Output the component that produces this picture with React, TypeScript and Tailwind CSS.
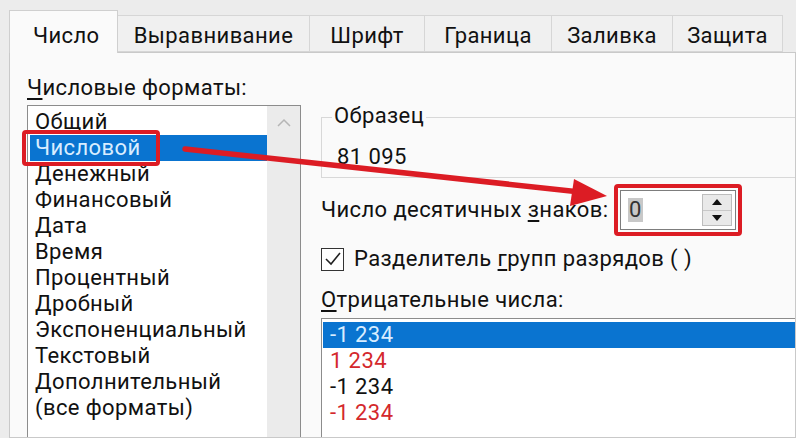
import React from "react";

const leftItems = [
  "Общий",
  "Числовой",
  "Денежный",
  "Финансовый",
  "Дата",
  "Время",
  "Процентный",
  "Дробный",
  "Экспоненциальный",
  "Текстовый",
  "Дополнительный",
  "(все форматы)",
];

const negItems: { t: string; c: string }[] = [
  { t: "-1 234", c: "sel" },
  { t: "1 234", c: "red" },
  { t: "-1 234", c: "black" },
  { t: "-1 234", c: "red" },
];

export default function App() {
  return (
    <div
      className="relative w-[796px] h-[438px] overflow-hidden bg-[#ececec] text-[#111] text-[22px] tracking-[0.4px]"
      style={{ fontFamily: 'Roboto, "Noto Sans", sans-serif' }}
    >
      <div className="flex flex-col pt-[10px] pl-[9px]">
        {/* tabs */}
        <div className="flex items-end h-[43px] -mb-[1px] relative z-10 shrink-0">
          <div className="h-[43px] w-[109px] border border-b-0 border-[#cfcfcf] bg-[#fafafa] flex items-center pl-[23px] pt-[6px]">
            Число
          </div>
          {[
            ["Выравнивание", "w-[192px]"],
            ["Шрифт", "w-[115px]"],
            ["Граница", "w-[127px]"],
            ["Заливка", "w-[121px]"],
            ["Защита", "w-[110px]"],
          ].map(([t, w]) => (
            <div
              key={t}
              className={`${w} h-[37px] border border-l-0 border-[#d6d6d6] bg-[#f0f0f0] flex items-center justify-center pt-[4px] mb-[1px]`}
            >
              {t}
            </div>
          ))}
        </div>
        {/* panel */}
        <div className="w-[787px] h-[386px] border border-[#c9c9c9] bg-[#fafafa] overflow-hidden flex shrink-0">
          {/* left column */}
          <div className="pl-[17px] pt-[22px] w-[292px] shrink-0">
            <div className="leading-[26px] h-[26px]">
              <span className="underline underline-offset-[3px]">Ч</span>
              исловые форматы:
            </div>
            <div className="mt-[4px] w-[274px] h-[360px] border border-[#8c8c8c] bg-white flex">
              <div className="flex-1 pt-[3px] pl-[2px]">
                {leftItems.map((t, i) => (
                  <div
                    key={t}
                    className={`h-[26px] leading-[26px] pl-[5px] ${
                      i === 1 ? "bg-[#0a74d0] text-[#d9edff]" : ""
                    }`}
                  >
                    {t}
                  </div>
                ))}
              </div>
              <div className="w-[33px] bg-[#ebebeb] flex justify-center pt-[12px]">
                <svg width="16" height="10" viewBox="0 0 16 10">
                  <path d="M2 8 L8 2 L14 8" fill="none" stroke="#b5b5b5" strokeWidth="1.5" />
                </svg>
              </div>
            </div>
          </div>
          {/* right column */}
          <div className="flex-1 pl-[19px] pt-[64px]">
            <div className="relative h-[61px] border border-r-0 border-[#d8d8d8] pl-[15px] pt-[26px]">
              <span className="absolute left-[10px] -top-[15px] px-[2px] bg-[#fafafa] leading-[26px]">
                Образец
              </span>
              <div className="leading-[26px]">81 095</div>
            </div>
            <div className="mt-[11px] h-[42px] flex items-center">
              <div className="w-[299px] leading-[26px] whitespace-nowrap">
                Число десятичных{" "}
                <span className="underline underline-offset-[3px]">з</span>наков:
              </div>
              <div className="relative">
                <div className="w-[116px] h-[40px] border border-[#7d7d7d] bg-white flex items-center pl-[7px] pr-[3px]">
                  <span className="bg-[#c8c8c8] text-[#333] leading-[24px] px-[1px]">0</span>
                  <div className="ml-auto flex flex-col w-[30px] h-[32px] border border-[#bdbdbd]">
                    <div className="flex-1 bg-[#e9e9e9] flex items-center justify-center border-b border-[#c8c8c8]">
                      <svg width="10" height="6" viewBox="0 0 10 6">
                        <path d="M0 6 L5 0 L10 6 Z" fill="#111" />
                      </svg>
                    </div>
                    <div className="flex-1 bg-[#e9e9e9] flex items-center justify-center">
                      <svg width="10" height="6" viewBox="0 0 10 6">
                        <path d="M0 0 L5 6 L10 0 Z" fill="#111" />
                      </svg>
                    </div>
                  </div>
                </div>
                <div className="absolute -left-[6px] -top-[6px] w-[128px] h-[52px] border-[4px] border-[#dc1c24] rounded-[4px]" />
              </div>
            </div>
            <div className="mt-[15px] h-[26px] flex items-center">
              <div className="w-[23px] h-[23px] border-[1.5px] border-[#333] bg-white flex items-center justify-center">
                <svg width="18" height="16" viewBox="0 0 18 16">
                  <path d="M2 8 L7 13 L16 2" fill="none" stroke="#222" strokeWidth="1.6" />
                </svg>
              </div>
              <div className="ml-[10px] leading-[26px] whitespace-nowrap">
                Разделитель{" "}
                <span className="underline underline-offset-[3px]">г</span>рупп разрядов ( )
              </div>
            </div>
            <div className="mt-[15px] h-[26px] leading-[26px]">
              <span className="underline underline-offset-[3px]">О</span>трицательные числа:
            </div>
            <div className="mt-[5px] h-[140px] border border-r-0 border-[#8c8c8c] bg-white pt-[3px] pl-[1px]">
              {negItems.map((it, i) => (
                <div
                  key={i}
                  className={`h-[26px] leading-[26px] pl-[7px] ${
                    it.c === "sel"
                      ? "bg-[#0a74d0] text-[#d9edff]"
                      : it.c === "red"
                      ? "text-[#d4282c]"
                      : "text-[#111]"
                  }`}
                >
                  {it.t}
                </div>
              ))}
            </div>
          </div>
        </div>
      </div>

      {/* red box around selected format */}
      <div className="absolute left-[22px] top-[130px] w-[138px] h-[36px] border-[4px] border-[#dc1c24] rounded-[4px] pointer-events-none" />

      {/* arrow */}
      <svg className="absolute inset-0 pointer-events-none" width="796" height="438" viewBox="0 0 796 438">
        <line x1="185" y1="149" x2="580" y2="192" stroke="#dc1c24" strokeWidth="5.5" strokeLinecap="round" />
        <path d="M607 196 L574 179 L570 206 Z" fill="#dc1c24" />
      </svg>
    </div>
  );
}
